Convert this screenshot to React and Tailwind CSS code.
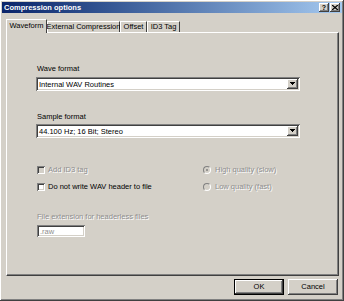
import React from 'react';

const font = { fontFamily: '"Liberation Sans", Arial, sans-serif' };

const raised =
  'shadow-[inset_-1px_-1px_#404040,inset_1px_1px_#ffffff,inset_-2px_-2px_#808080,inset_2px_2px_#d4d0c8]';
const sunken =
  'shadow-[inset_1px_1px_#808080,inset_-1px_-1px_#ffffff,inset_2px_2px_#404040,inset_-2px_-2px_#d4d0c8]';

const disabled = 'text-[#8e8e8e] [text-shadow:1px_1px_0_#ffffff]';

const Arrow = () => (
  <svg width="5" height="4" viewBox="0 0 5 4">
    <path d="M0 0h5v1H0z M1 1h3v1H1z M2 2h1v1H2z" fill="#000" />
  </svg>
);

const Combo = ({ value }) => (
  <div className={`flex h-[14px] w-[264px] items-center bg-white p-[2px] ${sunken}`}>
    <span className="flex-1 pl-[1px] text-[7.5px] leading-[9px] text-black">{value}</span>
    <div className={`flex h-[10px] w-[11px] items-center justify-center bg-[#d4d0c8] ${raised}`}>
      <Arrow />
    </div>
  </div>
);

const Check = ({ label, off }) => (
  <div className="flex h-[9px] items-center gap-[3px]">
    <div className={`h-[8px] w-[8px] ${off ? 'bg-[#d4d0c8]' : 'bg-white'} ${sunken}`} />
    <span className={`whitespace-nowrap text-[7.5px] leading-[9px] ${off ? disabled : 'text-black'}`}>{label}</span>
  </div>
);

const Radio = ({ label, checked }) => (
  <div className="flex h-[9px] items-center gap-[4px]">
    <div className="flex h-[8px] w-[8px] items-center justify-center rounded-full border border-t-[#808080] border-l-[#808080] border-r-white border-b-white bg-[#d4d0c8]">
      {checked && <div className="h-[2px] w-[2px] rounded-full bg-[#808080]" />}
    </div>
    <span className={`whitespace-nowrap text-[7.5px] leading-[9px] ${disabled}`}>{label}</span>
  </div>
);

const Tab = ({ label, w, active }) => (
  <div
    className={`flex items-center justify-center whitespace-nowrap border-l border-t border-r border-l-white border-t-white border-r-[#404040] bg-[#d4d0c8] text-[7.5px] text-black ${
      active ? 'relative z-10 -mb-[1px] h-[14px] pb-[1px]' : 'h-[11px]'
    }`}
    style={{ width: w }}
  >
    {label}
  </div>
);

export default function App() {
  return (
    <div
      className={`flex h-[301px] w-[344px] flex-col bg-[#d4d0c8] p-[2px] ${raised}`}
      style={font}
    >
      <div className="flex h-[11px] items-center justify-between bg-linear-to-r from-[#0a246a] to-[#a6caf0] pl-[2px] pr-[2px]">
        <span className="text-[7.5px] font-bold leading-[9px] text-white">Compression options</span>
        <div className="flex gap-[1px]">
          <div className={`flex h-[9px] w-[10px] items-center justify-center bg-[#d4d0c8] text-[7px] font-bold leading-none ${raised}`}>?</div>
          <div className={`flex h-[9px] w-[10px] items-center justify-center bg-[#d4d0c8] ${raised}`}>
            <svg width="6" height="5" viewBox="0 0 6 5">
              <path d="M0 0L6 5M6 0L0 5" stroke="#000" strokeWidth="1.3" />
            </svg>
          </div>
        </div>
      </div>

      <div className="mt-[6px] flex items-end pl-[4px]">
        <Tab label="Waveform" w={41} active />
        <Tab label="External Compression" w={73} />
        <Tab label="Offset" w={27} />
        <Tab label="ID3 Tag" w={33} />
      </div>

      <div className="ml-[4px] flex h-[244px] w-[333px] flex-col border border-l-white border-t-white border-r-[#404040] border-b-[#404040] pl-[30px] pt-[31px] shadow-[inset_-1px_-1px_#808080]">
        <div className="h-[9px] text-[7.5px] leading-[9px] text-black">Wave format</div>
        <div className="mt-[4px] -ml-[1px]">
          <Combo value="Internal WAV Routines" />
        </div>
        <div className="mt-[21px] h-[9px] text-[7.5px] leading-[9px] text-black">Sample format</div>
        <div className="mt-[3px] -ml-[1px]">
          <Combo value="44.100 Hz; 16 Bit; Stereo" />
        </div>

        <div className="mt-[27px] flex">
          <div className="flex w-[166px] flex-col gap-[8px]">
            <Check label="Add ID3 tag" off />
            <Check label="Do not write WAV header to file" />
          </div>
          <div className="flex flex-col gap-[8px]">
            <Radio label="High quality (slow)" checked />
            <Radio label="Low quality (fast)" />
          </div>
        </div>

        <div className={`mt-[21px] h-[9px] text-[7.5px] leading-[9px] ${disabled}`}>
          File extension for headerless files
        </div>
        <div className={`mt-[4px] flex h-[12px] w-[48px] items-center bg-white pl-[3px] ${sunken}`}>
          <span className="text-[7.5px] leading-[9px] text-[#8e8e8e]">.raw</span>
        </div>
      </div>

      <div className="mt-[3px] flex justify-end gap-[4px] pr-[4px]">
        <div className="h-[16px] w-[50px] border border-black">
          <div className={`flex h-full w-full items-center justify-center bg-[#d4d0c8] text-[7.5px] text-black ${raised}`}>OK</div>
        </div>
        <div className={`flex h-[16px] w-[50px] items-center justify-center bg-[#d4d0c8] text-[7.5px] text-black ${raised}`}>
          Cancel
        </div>
      </div>
    </div>
  );
}
